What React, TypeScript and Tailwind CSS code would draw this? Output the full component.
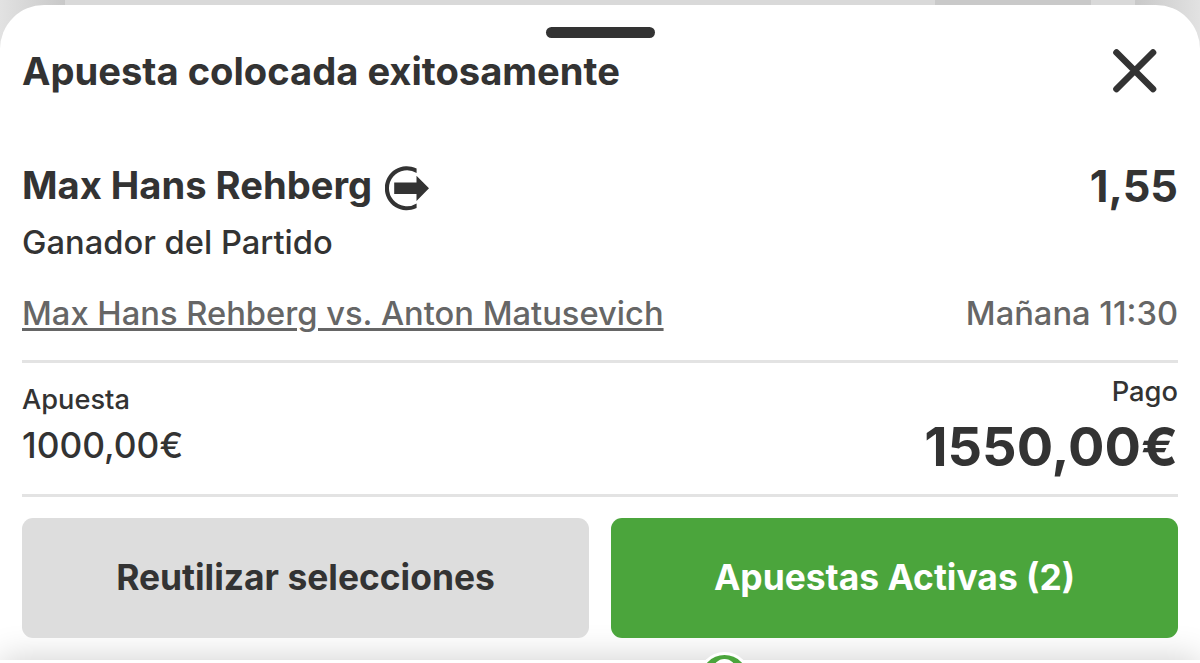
import React from "react";

const CloseIcon = () => (
  <svg className="w-[46px] h-[46px]" viewBox="0 0 46 46" fill="none">
    <path d="M4.5 4.5L41 41M41 4.5L4.5 41" stroke="#333333" strokeWidth="6.6" strokeLinecap="round" />
  </svg>
);

const SubstitutionIcon = () => (
  <svg className="w-[45px] h-[45px]" viewBox="0 0 45 45" fill="#333333">
    <path d="M31.6 2.5A22 22 0 1 0 31.6 41.9V37.4A18 18 0 1 1 31.6 7Z" />
    <path d="M9.2 16.4H31.5V9.7L44 22.3L31.5 35V28H9.2Z" />
  </svg>
);

const Backdrop = () => (
  <div className="flex h-[50px] bg-[#d9d9d9]">
    <div className="w-[65px] bg-linear-to-r from-[#e2e2e2] to-[#c8c8c8]"></div>
    <div className="w-[870px]"></div>
    <div className="w-[156px] bg-[#c9c9c9]"></div>
    <div className="w-[44px]"></div>
    <div className="w-[65px] bg-linear-to-r from-[#c8c8c8] to-[#e2e2e2]"></div>
  </div>
);

const App = () => {
  return (
    <div className="relative w-[1200px] h-[663px] overflow-hidden bg-white text-[#333333] font-['Inter',sans-serif]">
      <Backdrop />

      {/* Bet slip sheet */}
      <div className="-mt-[45px] h-[655px] bg-white rounded-t-[44px] flex flex-col relative">
        <div className="w-[109px] h-[11px] mt-[22px] mx-auto rounded-full bg-[#333333]"></div>

        {/* Header */}
        <div className="flex justify-between items-center h-[46px] mt-[10px] pl-[22px] pr-[42px]">
          <h1 className="text-[38.15px] font-bold pt-[2px]">Apuesta colocada exitosamente</h1>
          <CloseIcon />
        </div>

        {/* Selection */}
        <div className="flex justify-between items-center h-11 mt-[72px] px-[22px]">
          <div className="flex items-center gap-[12.5px]">
            <p className="text-[38.15px] font-bold -mt-[5px]">Max Hans Rehberg</p>
            <SubstitutionIcon />
          </div>
          <p className="text-[43.3px] font-bold -mt-[3px]">1,55</p>
        </div>
        <p className="text-[32.7px] leading-[40px] font-medium mt-[12px] px-[22px]">Ganador del Partido</p>
        <div className="flex justify-between text-[32.7px] leading-[40px] text-[#666666] font-medium mt-[31px] px-[22px]">
          <p className="underline decoration-[2.7px] underline-offset-[3px]">Max Hans Rehberg vs. Anton Matusevich</p>
          <p>Mañana 11:30</p>
        </div>

        {/* Stake and payout */}
        <div className="flex justify-between h-[137px] mt-[27px] mx-[22px] border-y-3 border-[#e3e3e3]">
          <div className="pt-[20px]">
            <p className="text-[27.2px] leading-[34px] font-medium">Apuesta</p>
            <p className="text-[35.3px] leading-[44px] font-medium mt-[7px]">1000,00€</p>
          </div>
          <div className="text-right pt-[12px]">
            <p className="text-[27.3px] leading-[34px] font-medium">Pago</p>
            <p className="text-[54.1px] leading-[64px] font-bold mt-[6px]">1550,00€</p>
          </div>
        </div>

        {/* Buttons */}
        <div className="flex gap-[22px] pt-[21px] px-[22px] relative z-10">
          <button className="flex-1 h-[120px] rounded-[11px] bg-[#dddddd] text-[35.4px] font-bold pb-[1px]">
            Reutilizar selecciones
          </button>
          <button className="flex-1 h-[120px] rounded-[11px] bg-[#4ba53c] text-white text-[35.4px] font-bold pb-[1px]">
            Apuestas Activas (2)
          </button>
        </div>
      </div>

      {/* Bottom bar */}
      <div className="relative h-[60px] bg-white shadow-[0_0_36px_rgba(0,0,0,0.2)]">
        <div className="absolute left-[698px] -top-[8px] w-[53px] h-[53px] rounded-full bg-[#4ba53c] border-3 border-white flex justify-center pt-1">
          <div className="w-[23px] h-[23px] rounded-full bg-white"></div>
        </div>
      </div>
    </div>
  );
};

export default App;
